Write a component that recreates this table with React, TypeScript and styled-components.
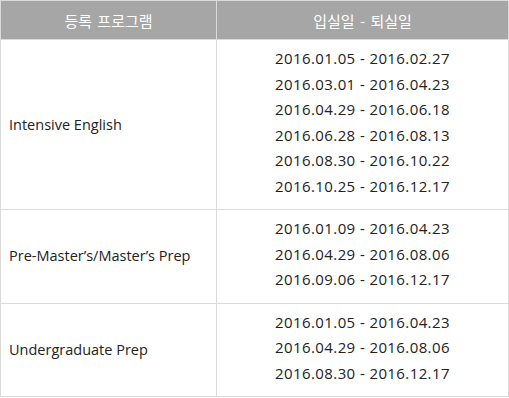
import styled, { createGlobalStyle } from 'styled-components';

const GlobalStyle = createGlobalStyle`
  html, body {
    margin: 0;
    padding: 0;
    background: #fff;
  }
  body {
    font-family: 'Open Sans', 'Noto Sans CJK KR', sans-serif;
    color: #222;
  }
`;

const Table = styled.table`
  width: 509px;
  border-collapse: collapse;
  table-layout: fixed;
  border: 1px solid #dadada;
`;

const Th = styled.th<{ $width?: number }>`
  width: ${(p) => (p.$width ? `${p.$width}px` : 'auto')};
  height: 38px;
  padding: 0;
  background: #a6a6a6;
  color: #fff;
  font-family: 'Noto Sans CJK KR', sans-serif;
  font-size: 15px;
  font-weight: 400;
  text-align: center;
  border: 1px solid #dadada;
  word-spacing: 2px;
`;

const ProgramCell = styled.td`
  padding: 0 8px;
  font-size: 14.5px;
  line-height: 20px;
  color: #222;
  border: 1px solid #dadada;
  vertical-align: middle;
`;

const DateCell = styled.td`
  padding: 6px 0 10px;
  text-align: center;
  border: 1px solid #dadada;
  vertical-align: middle;
`;

const DateLine = styled.div`
  font-size: 15px;
  letter-spacing: 0.4px;
  line-height: 25.5px;
  color: #222;
`;

const programs = [
  {
    name: 'Intensive English',
    dates: [
      '2016.01.05 - 2016.02.27',
      '2016.03.01 - 2016.04.23',
      '2016.04.29 - 2016.06.18',
      '2016.06.28 - 2016.08.13',
      '2016.08.30 - 2016.10.22',
      '2016.10.25 - 2016.12.17',
    ],
  },
  {
    name: 'Pre-Master\u2019s/Master\u2019s Prep',
    dates: ['2016.01.09 - 2016.04.23', '2016.04.29 - 2016.08.06', '2016.09.06 - 2016.12.17'],
  },
  {
    name: 'Undergraduate Prep',
    dates: ['2016.01.05 - 2016.04.23', '2016.04.29 - 2016.08.06', '2016.08.30 - 2016.12.17'],
  },
];

export default function App() {
  return (
    <>
      <GlobalStyle />
      <Table>
        <thead>
          <tr>
            <Th $width={215}>등록 프로그램</Th>
            <Th>입실일 - 퇴실일</Th>
          </tr>
        </thead>
        <tbody>
          {programs.map((p) => (
            <tr key={p.name}>
              <ProgramCell>{p.name}</ProgramCell>
              <DateCell>
                {p.dates.map((d) => (
                  <DateLine key={d}>{d}</DateLine>
                ))}
              </DateCell>
            </tr>
          ))}
        </tbody>
      </Table>
    </>
  );
}
